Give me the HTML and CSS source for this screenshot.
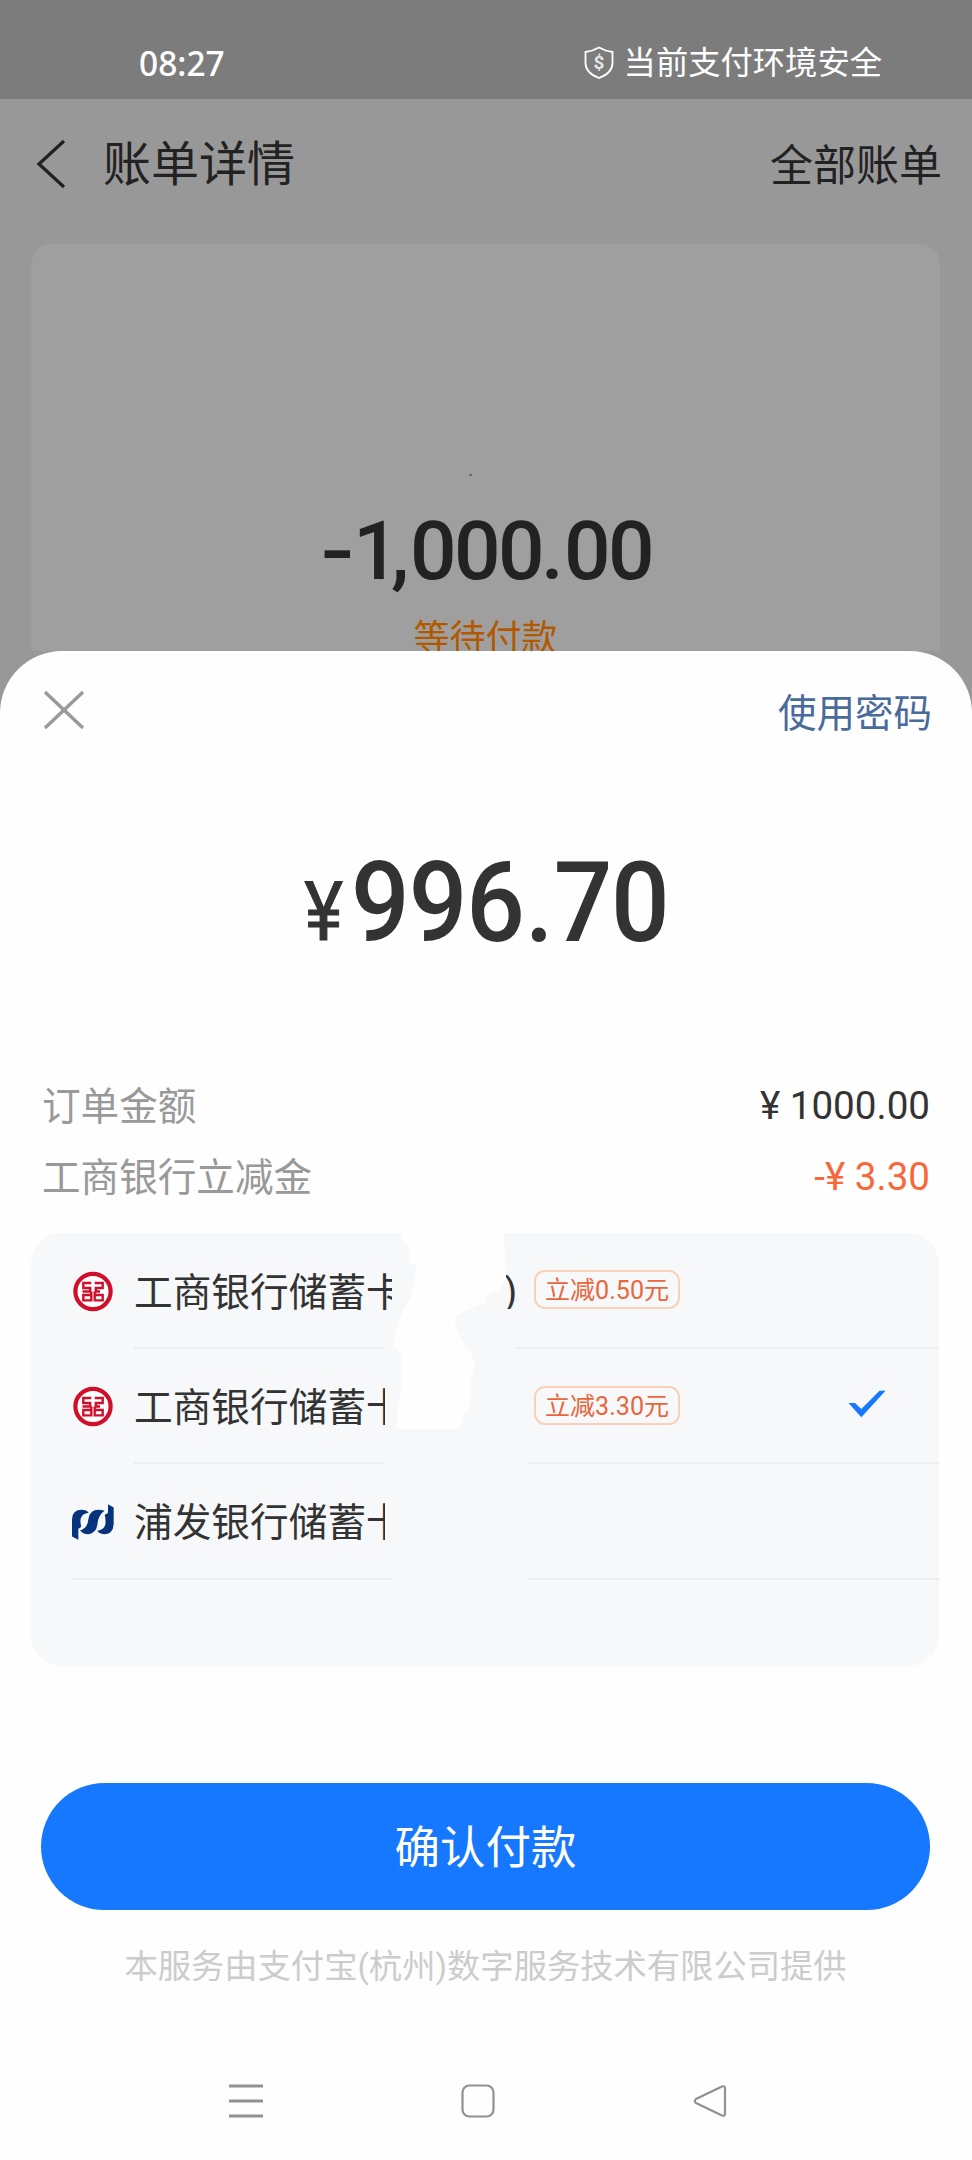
FILE: index.html
```html
<!DOCTYPE html>
<html lang="zh-CN">
<head>
<meta charset="utf-8">
<title>确认付款</title>
<link rel="stylesheet" href="styles.css">
</head>
<body>
<svg width="0" height="0" class="defs">
  <symbol id="icbc" viewBox="0 0 40 40">
    <circle cx="20" cy="20" r="17.6" fill="#fff" stroke="#d0102a" stroke-width="4.2"/>
    <path d="M18.300 11.500H10.300V16.500H17.200V20H13M9.500 20H14M17.200 23.500H10.300V28.900H18.300V20M21.700 11.500H29.700V16.500H22.800V20H27M21.700 20V28.900H29.700V23.500H22.800" fill="none" stroke="#d0102a" stroke-width="2.400"/>
  </symbol>
</svg>
<div class="screen">
  <header class="status">
    <span class="time">08:27</span>
    <span class="secure">
      <svg width="32" height="34" viewBox="0 0 32 34"><path d="M16 1.5Q22 5 29.5 6V17Q29.5 27 16 32Q2.500 27 2.500 17V6Q10 5 16 1.500Z" fill="none" stroke="#fff" stroke-width="1.8"/><text x="16" y="23" text-anchor="middle" class="dollar">$</text></svg>
      当前支付环境安全
    </span>
  </header>
  <nav class="topbar">
    <svg width="30" height="50" viewBox="0 0 30 50"><path d="M28 2 3 25 28 48" fill="none" stroke="#222" stroke-width="3.3"/></svg>
    <h1>账单详情</h1>
    <span class="all">全部账单</span>
  </nav>
  <section class="bill">
    <i class="speck"></i>
    <svg class="total" width="340" height="90" viewBox="0 0 340 90"><text transform="scale(1.2 1)" x="4" y="70">-</text><text x="37 75 94 138 182 225 248 292" y="70">1,000.00</text></svg>
    <p class="pending">等待付款</p>
  </section>
  <main class="sheet">
    <div class="sheet-head">
      <svg width="42" height="40" viewBox="0 0 42 40"><path d="M2 2 40 38M40 2 2 38" stroke="#999" stroke-width="3.4"/></svg>
      <a>使用密码</a>
    </div>
    <svg class="price" width="380" height="110" viewBox="0 0 380 110"><text class="yen" transform="scale(.9 1)" x="7" y="88">¥</text><text class="num" transform="scale(.93 1)" x="57 119 181 244 275 336.500" y="89">996.70</text></svg>
    <div class="line"><span>订单金额</span><b>¥ 1000.00</b></div>
    <div class="line"><span>工商银行立减金</span><b class="off">-¥ 3.30</b></div>
    <ul class="cards">
      <li class="card first">
        <svg class="logo" width="40" height="41"><use href="#icbc"/></svg>
        <span class="name">工商银行储蓄卡</span><span class="paren">)</span><span class="badge">立减0.50元</span>
        <i class="rule"></i><i class="rule tail"></i>
      </li>
      <li class="card">
        <svg class="logo" width="40" height="41"><use href="#icbc"/></svg>
        <span class="name">工商银行储蓄卡</span><span class="badge">立减3.30元</span>
        <svg class="check" width="38" height="28" viewBox="0 0 38 28"><path d="M0.500 13H7L13.300 19 31.500 0.700H37.500L13.300 27.200Z" fill="#1677ff"/></svg>
        <i class="rule"></i><i class="rule tail"></i>
      </li>
      <li class="card last">
        <svg class="logo spdb" width="42" height="38" viewBox="156 163 126 113"><g fill="#05347c"><path d="M156 263V212Q156 183 186 183Q200 183 206 192Q186 194 182 210Q180 222 184 232Q180 238 175 240V273Z"/><path d="M254 186Q238 180 224 184Q207 191 205 212Q203 238 180 245Q188 256 205 256Q228 254 232 228Q234 198 254 186Z"/><path d="M264 166 281 176V226Q279 256 252 256Q238 256 232 246Q252 243 256 228Q258 212 254 198Q260 196 264 192Z"/></g></svg>
        <span class="name">浦发银行储蓄卡</span>
        <i class="rule"></i><i class="rule tail"></i>
      </li>
      <svg class="smudge" width="118" height="198" viewBox="392 1232 118 198"><path d="M402 1232 402 1241 409 1245 409 1263 417 1264 415 1278 411 1298Q408 1303 403 1310L397 1327 393 1347 401 1353 401 1390 397 1410 397 1427Q399 1429 403 1429L459 1429Q462 1428 464 1415L470 1408 471 1377 474 1368Q475 1360 473 1357L465 1345Q459 1333 455 1325L456 1315 485 1303 487 1295 500 1290 506 1277 504 1232Z" fill="#fefefe"/></svg>
    </ul>
    <button class="pay"><span>确认付款</span></button>
    <p class="provider">本服务由支付宝(杭州)数字服务技术有限公司提供</p>
    <div class="sysnav">
      <svg width="34" height="34" viewBox="0 0 34 34"><path d="M0 2H34M0 17H34M0 32H34" stroke="#919191" stroke-width="2.8"/></svg>
      <svg width="34" height="34" viewBox="0 0 34 34"><rect x="1.500" y="1.500" width="31" height="31" rx="7" fill="none" stroke="#919191" stroke-width="2.200"/></svg>
      <svg width="34" height="34" viewBox="0 0 34 34"><path d="M29 2.500 3 15Q0.500 17 3 19L29 31.500Q32 32.500 32 29.500V4.500Q32 1.500 29 2.500Z" fill="none" stroke="#919191" stroke-width="2.200"/></svg>
    </div>
  </main>
</div>
</body>
</html>
```
FILE: styles.css
```css
* { box-sizing: border-box; margin: 0; padding: 0; }
body { font-family: Roboto, "Noto Sans CJK SC", sans-serif; color: #333; }
svg { display: block; flex: none; overflow: visible; }
.defs { position: absolute; }
.screen { width: 972px; height: 2160px; overflow: hidden; background: #989898; }

.status { display: flex; align-items: center; justify-content: space-between; height: 99px; padding: 26px 90px 0 139px; background: #7c7c7c; color: #fff; }
.time { font: 500 33.500px/40px "Noto Sans", sans-serif; }
.secure { display: flex; align-items: center; gap: 9px; font-size: 32.300px; line-height: 40px; white-space: nowrap; }
.dollar { font: 700 19px Roboto, sans-serif; fill: #e6e6e6; }

.topbar { display: flex; align-items: center; height: 145px; padding: 0 30px 16px 36px; color: #222; }
.topbar h1 { margin: 2px 0 0 37px; font-size: 48px; font-weight: 400; line-height: 60px; }
.all { margin: 5px 0 0 auto; font-size: 43px; line-height: 60px; }

.bill { display: flex; flex-direction: column; align-items: center; width: 909px; height: 407px; margin-left: 31px; border-radius: 20px 20px 0 0; background: #9f9f9f; }
.speck { flex: none; width: 3px; height: 2px; margin: 230px 31px 0 0; background: #707070; }
.total { margin-top: 33px; }
.total text { font: 500 82px Roboto, sans-serif; fill: #222; }
.pending { margin-top: 15px; font-size: 36px; line-height: 50px; color: #b25900; }

.sheet { position: relative; height: 1509px; border-radius: 62px 62px 0 0; background: #fefefe; padding-top: 38px; }
.sheet-head { display: flex; justify-content: space-between; padding: 1px 40px 0 43px; height: 50px; }
.sheet-head a { font-size: 38.500px; line-height: 48px; color: #4a6a9c; }
.price { margin: 113px 0 0 298px; }
.yen { font: 400 82px Roboto, sans-serif; fill: #333; stroke: #333; stroke-width: 1px; }
.num { font: 500 111px Roboto, sans-serif; fill: #333; }
.line { display: flex; justify-content: space-between; align-items: center; height: 71px; padding: 0 42px; font-size: 38.600px; color: #999; }
.line span { padding-bottom: 5px; }
.price + .line { margin-top: 108px; }
.line b { font-weight: 400; color: #333; }
.line .off { color: #f6683a; }

.cards { position: relative; width: 908px; height: 433px; margin: 21px 0 0 31px; border-radius: 31px; background: #f6f8fa; list-style: none; }
.card { position: relative; display: flex; align-items: center; height: 115.500px; padding-left: 42px; }
.logo { width: 40px; }
.spdb { width: 42px; margin: 0 -1px; }
.name { width: 251px; margin: 3px 0 0 21px; overflow: hidden; white-space: nowrap; font-size: 38.700px; line-height: 56px; }
.first .name { width: 258px; margin-top: 2px; }
.first { padding-top: 2px; }
.paren { width: 12px; height: 34px; margin-left: 112px; overflow: hidden; font-size: 38px; line-height: 34px; }
.badge { position: absolute; left: 503px; top: 37px; width: 146px; height: 39px; border: 2px solid #fbd0b9; border-radius: 11px; font-size: 25.100px; line-height: 37px; text-align: center; color: #e9663c; white-space: nowrap; }
.check { position: absolute; left: 817px; top: 41px; }
.rule { position: absolute; left: 103px; bottom: 0; width: 251px; height: 2px; background: #eceef1; }
.tail { left: 497px; width: 411px; }
.first .tail { left: 484px; width: 424px; }
.last .rule:not(.tail) { left: 41px; width: 321px; }
.smudge { position: absolute; left: 361px; top: -1px; }

.pay { display: block; width: 889px; height: 127px; margin: 117px 0 0 41px; border: 0; border-radius: 64px; background: #1677ff; color: #fff; font: 400 45.500px/127px Roboto, "Noto Sans CJK SC", sans-serif; }
.pay span { display: block; padding-top: 5px; line-height: 122px; }
.provider { margin-top: 31px; padding-right: 1px; font-size: 33.300px; line-height: 52px; text-align: center; color: #ccc; white-space: nowrap; }
.sysnav { display: flex; gap: 198px; margin: 91px 0 0 229px; }
```
